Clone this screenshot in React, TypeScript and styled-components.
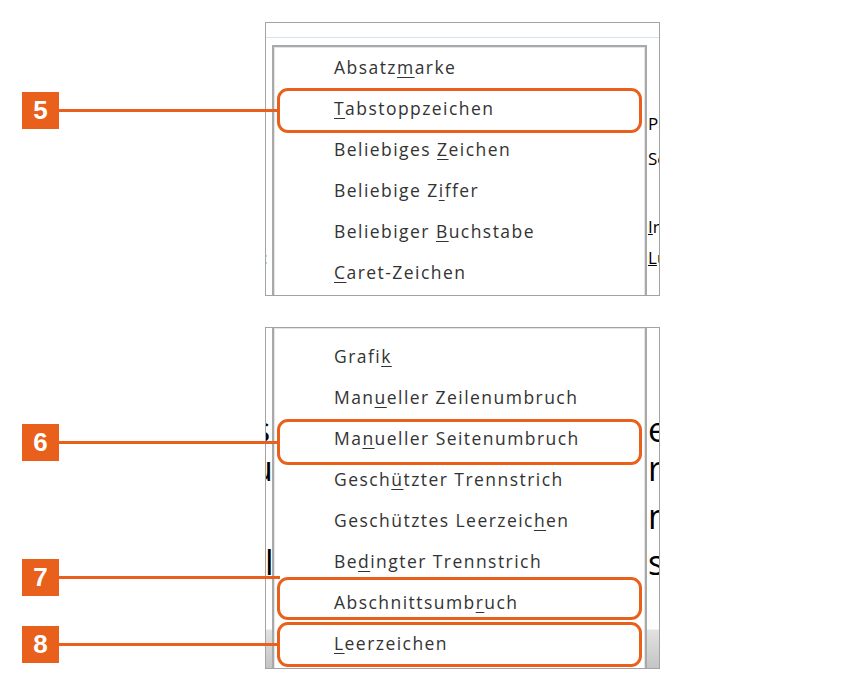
import React from "react";
import styled, { createGlobalStyle } from "styled-components";

const ORANGE = "#e8601c";

const Global = createGlobalStyle`
  html, body { margin: 0; padding: 0; background: #fff; }
  body { width: 850px; height: 691px; overflow: hidden; }
`;

const Figure = styled.div`
  position: relative;
  width: 850px;
  height: 691px;
  display: flex;
  flex-direction: column;
  gap: 31px;
  padding: 22px 0 0 265px;
  box-sizing: border-box;
  font-family: "Open Sans", "Noto Sans", sans-serif;
`;

const Panel = styled.div<{ $h: number }>`
  position: relative;
  width: 395px;
  height: ${(p) => p.$h}px;
  box-sizing: border-box;
  border: 1px solid #a3a3a3;
  background: #fff;
  overflow: hidden;
  display: flex;
  flex-direction: column;
`;

const Toolbar = styled.div`
  height: 14px;
  flex: none;
  border-bottom: 1px solid #d6e2ee;
`;

const DocRow = styled.div<{ $h: number; $size?: number }>`
  height: ${(p) => p.$h}px;
  flex: none;
  display: flex;
  align-items: center;
  justify-content: space-between;
  font-size: ${(p) => p.$size ?? 17}px;
  color: #000;
  white-space: nowrap;
  line-height: 1;
`;

const LeftFrag = styled.span<{ $shift?: number }>`
  margin-left: ${(p) => p.$shift ?? 0}px;
`;

const RightFrag = styled.span<{ $shift?: number }>`
  margin-right: ${(p) => p.$shift ?? 0}px;
  width: 12px;
  overflow: visible;
`;

const StatusStrip = styled.div`
  margin-top: auto;
  height: 38px;
  flex: none;
  border-top: 1px solid #f2f2f2;
  background: linear-gradient(#e2e2e2, #c4c4c4);
`;

const Menu = styled.div<{ $top: number; $cont?: boolean }>`
  position: absolute;
  left: 6px;
  right: 12px;
  top: ${(p) => p.$top}px;
  bottom: -4px;
  background: #fff;
  border: 2px solid #a9a9a9;
  border-top: ${(p) => (p.$cont ? "none" : "2px solid #a9a9a9")};
  box-shadow: inset 1px 1px 0 #e4e4e4, inset -1px 0 0 #e4e4e4;
  padding-top: ${(p) => (p.$cont ? 8 : 0)}px;
  box-sizing: border-box;
`;

const Item = styled.div<{ $hl?: boolean; $t?: number; $b?: number }>`
  position: relative;
  height: 41px;
  line-height: 41px;
  padding-left: 60px;
  font-size: 17.5px;
  letter-spacing: 1.45px;
  color: #333;
  white-space: nowrap;

  &::after {
    content: "";
    display: ${(p) => (p.$hl ? "block" : "none")};
    position: absolute;
    left: 3px;
    right: 3px;
    top: ${(p) => p.$t ?? 0}px;
    bottom: ${(p) => p.$b ?? 0}px;
    border: 3px solid ${ORANGE};
    border-radius: 11px;
  }

  u {
    text-decoration-thickness: 1px;
    text-underline-offset: 3px;
  }
`;

const Callout = styled.div<{ $y: number }>`
  position: absolute;
  left: 22px;
  top: ${(p) => p.$y - 18}px;
  display: flex;
  align-items: center;
`;

const Badge = styled.div`
  width: 37px;
  height: 37px;
  background: ${ORANGE};
  color: #fff;
  font-family: "Liberation Sans", Arial, sans-serif;
  font-weight: 700;
  font-size: 26px;
  display: flex;
  align-items: center;
  justify-content: center;
`;

const Connector = styled.div`
  width: 221px;
  height: 3px;
  background: ${ORANGE};
`;

type MI = { pre: string; u: string; post: string; hl?: boolean; t?: number; b?: number };

const topItems: MI[] = [
  { pre: "Absatz", u: "m", post: "arke" },
  { pre: "", u: "T", post: "abstoppzeichen", hl: true, t: 0, b: -4 },
  { pre: "Beliebiges ", u: "Z", post: "eichen" },
  { pre: "Beliebige Z", u: "i", post: "ffer" },
  { pre: "Beliebiger ", u: "B", post: "uchstabe" },
  { pre: "", u: "C", post: "aret-Zeichen" },
];

const bottomItems: MI[] = [
  { pre: "Grafi", u: "k", post: "" },
  { pre: "Man", u: "u", post: "eller Zeilenumbruch" },
  { pre: "Ma", u: "n", post: "ueller Seitenumbruch", hl: true, t: 1, b: -6 },
  { pre: "Gesch", u: "ü", post: "tzter Trennstrich" },
  { pre: "Geschütztes Leerzeic", u: "h", post: "en" },
  { pre: "Be", u: "d", post: "ingter Trennstrich" },
  { pre: "Abschnittsumb", u: "r", post: "uch", hl: true, t: -5, b: 3 },
  { pre: "", u: "L", post: "eerzeichen", hl: true, t: -1, b: -3 },
];

const renderItems = (items: MI[]) =>
  items.map((it, i) => (
    <Item key={i} $hl={it.hl} $t={it.t} $b={it.b}>
      {it.pre}
      <u>{it.u}</u>
      {it.post}
    </Item>
  ));

export default function App() {
  return (
    <>
      <Global />
      <Figure>
        <Panel $h={274}>
          <Toolbar />
          <DocRow $h={70} />
          <DocRow $h={30}>
            <LeftFrag />
            <RightFrag $shift={-1}>Pa</RightFrag>
          </DocRow>
          <DocRow $h={40}>
            <LeftFrag />
            <RightFrag $shift={-1}>Sc</RightFrag>
          </DocRow>
          <DocRow $h={33} />
          <DocRow $h={30}>
            <LeftFrag />
            <RightFrag $shift={-1}>
              <u>I</u>n
            </RightFrag>
          </DocRow>
          <DocRow $h={32}>
            <LeftFrag $shift={-3}>:</LeftFrag>
            <RightFrag $shift={-1}>
              <u>L</u>u
            </RightFrag>
          </DocRow>
          <Menu $top={22}>{renderItems(topItems)}</Menu>
        </Panel>

        <Panel $h={342}>
          <DocRow $h={86} />
          <DocRow $h={30} $size={34}>
            <LeftFrag $shift={-12}>s</LeftFrag>
            <RightFrag $shift={-1}>e</RightFrag>
          </DocRow>
          <DocRow $h={48} $size={34}>
            <LeftFrag $shift={-14}>u</LeftFrag>
            <RightFrag $shift={-1}>r,</RightFrag>
          </DocRow>
          <DocRow $h={48} $size={34}>
            <LeftFrag />
            <RightFrag $shift={-1}>n</RightFrag>
          </DocRow>
          <DocRow $h={44} $size={34}>
            <LeftFrag $shift={-1}>l</LeftFrag>
            <RightFrag $shift={-1}>s</RightFrag>
          </DocRow>
          <StatusStrip />
          <Menu $top={0} $cont>
            {renderItems(bottomItems)}
          </Menu>
        </Panel>

        <Callout $y={110}>
          <Badge>5</Badge>
          <Connector />
        </Callout>
        <Callout $y={442}>
          <Badge>6</Badge>
          <Connector />
        </Callout>
        <Callout $y={577}>
          <Badge>7</Badge>
          <Connector />
        </Callout>
        <Callout $y={644}>
          <Badge>8</Badge>
          <Connector />
        </Callout>
      </Figure>
    </>
  );
}
